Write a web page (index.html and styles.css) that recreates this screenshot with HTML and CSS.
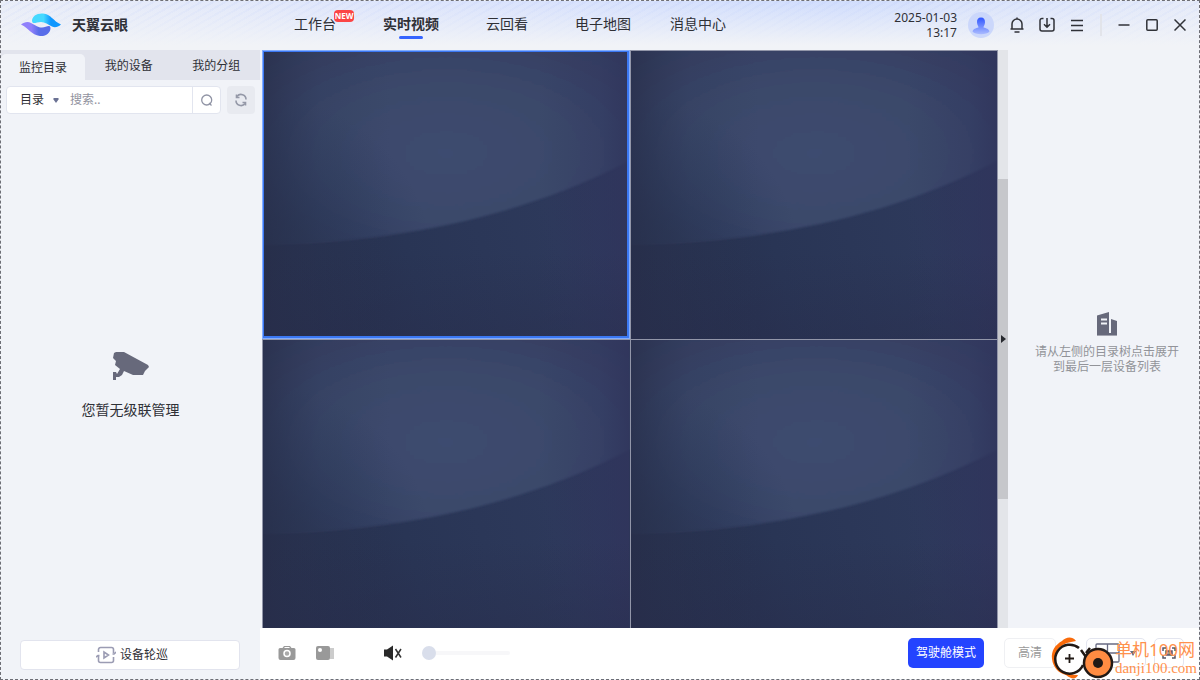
FILE: index.html
```html
<!DOCTYPE html>
<html lang="zh-CN">
<head>
<meta charset="utf-8">
<title>天翼云眼</title>
<link rel="stylesheet" href="styles.css">
</head>
<body>
<svg class="defs" aria-hidden="true">
  <defs>
    <radialGradient id="upper" cx="0.5" cy="0.55" r="0.68">
      <stop offset="0" stop-color="#3e4c6f"/>
      <stop offset="0.5" stop-color="#3b486b"/>
      <stop offset="1" stop-color="#353d60"/>
    </radialGradient>
    <linearGradient id="lower" x1="0" y1="0.8" x2="1" y2="0.6">
      <stop offset="0" stop-color="#252c48"/>
      <stop offset="0.4" stop-color="#293555"/>
      <stop offset="0.8" stop-color="#2d395b"/>
      <stop offset="1" stop-color="#2e365a"/>
    </linearGradient>
    <linearGradient id="sides" x1="0" y1="0" x2="1" y2="0">
      <stop offset="0" stop-color="#282f4b" stop-opacity="0.75"/>
      <stop offset="0.16" stop-color="#2c3755" stop-opacity="0.25"/>
      <stop offset="0.35" stop-color="#2c3957" stop-opacity="0"/>
      <stop offset="0.75" stop-color="#30365f" stop-opacity="0"/>
      <stop offset="0.92" stop-color="#30365f" stop-opacity="0.4"/>
      <stop offset="1" stop-color="#30355c" stop-opacity="0.85"/>
    </linearGradient>
    <linearGradient id="depth" x1="0" y1="0" x2="0" y2="1">
      <stop offset="0.7" stop-color="#282c4b" stop-opacity="0"/>
      <stop offset="1" stop-color="#282c4b" stop-opacity="0.4"/>
    </linearGradient>
    <radialGradient id="cornerFade" gradientUnits="userSpaceOnUse" cx="0" cy="215" r="170">
      <stop offset="0" stop-color="#283350"/>
      <stop offset="0.3" stop-color="#293553" stop-opacity="0.85"/>
      <stop offset="1" stop-color="#2b395e" stop-opacity="0"/>
    </radialGradient>
    <filter id="soften" x="-5%" y="-5%" width="110%" height="110%">
      <feGaussianBlur stdDeviation="1"/>
    </filter>
    <symbol id="tile" viewBox="0 0 366 288" preserveAspectRatio="none">
      <rect width="366" height="288" fill="url(#lower)"/>
      <path d="M-9 -9H375V106L366 110C250 170 120 193 -9 193Z" fill="url(#upper)" filter="url(#soften)"/>
      <path d="M-9 -9H375V106L366 110C250 170 120 193 -9 193Z" fill="url(#cornerFade)"/>
      <rect width="366" height="288" fill="url(#sides)"/>
      <rect width="366" height="288" fill="url(#depth)"/>
    </symbol>
    <linearGradient id="avatarFill" x1="0" y1="0" x2="0" y2="1">
      <stop offset="0" stop-color="#2f55ff"/>
      <stop offset="1" stop-color="#a9baff"/>
    </linearGradient>
    <linearGradient id="logoTop" x1="0" y1="0" x2="1" y2="0">
      <stop offset="0.4" stop-color="#45d9ff"/>
      <stop offset="0.65" stop-color="#0f97ff"/>
    </linearGradient>
    <linearGradient id="logoBottom" x1="0" y1="0" x2="1" y2="0">
      <stop offset="0.35" stop-color="#9080fb"/>
      <stop offset="0.6" stop-color="#586de9"/>
    </linearGradient>
  </defs>
</svg>

<div class="window">
  <header class="header">
    <div class="brand">
      <svg class="logo" viewBox="0 0 40 24" aria-hidden="true">
        <path d="M11 8C11 3 16 0 22 0.500C30 1 32 8 40 11.500C37 14 34 15 31 13.500C27 11.500 24 9 20 9C15 9 12 12 11 8Z" fill="url(#logoTop)"/>
        <path d="M29.500 15C29.500 20 25 23.500 19 23C10 22 8 15 0 11.500C3 9 7 8 10 10C15 12.500 17 14.500 21 14.500C25 14.500 29 11 29.500 15Z" fill="url(#logoBottom)"/>
      </svg>
      <h1 class="brand-name">天翼云眼</h1>
    </div>
    <nav class="nav">
      <a class="nav-item" href="#">工作台<span class="badge">NEW</span></a>
      <a class="nav-item nav-item-active" href="#">实时视频</a>
      <a class="nav-item" href="#">云回看</a>
      <a class="nav-item" href="#">电子地图</a>
      <a class="nav-item" href="#">消息中心</a>
    </nav>
    <div class="tools">
      <time class="clock">2025-01-03<br>13:17</time>
      <button class="icon-button avatar" aria-label="账号">
        <svg width="26" height="26" viewBox="0 0 26 26"><circle cx="13" cy="13" r="13" fill="#cbd7fb"/><path d="M13 5.500C16 5.500 17.200 7.500 17 10.500C16.800 13 15.500 14 15.500 15.500C18 16.200 21 17 21.500 19.500C19 23 7 23 4.500 19.500C5 17 8 16.200 10.500 15.500C10.500 14 9.200 13 9 10.500C8.800 7.500 10 5.500 13 5.500Z" fill="url(#avatarFill)"/></svg>
      </button>
      <button class="icon-button" aria-label="通知">
        <svg width="16" height="16" viewBox="0 0 16 16" class="line"><path d="M1.500 12H14.500M3 12V7A5 5 0 0 1 13 7V12M5.500 15H10.500M8 2V0.500"/></svg>
      </button>
      <button class="icon-button" aria-label="下载">
        <svg width="16" height="16" viewBox="0 0 16 16" class="line"><path d="M4.500 1.500H3A2 2 0 0 0 1 3.500V12A2 2 0 0 0 3 14H13A2 2 0 0 0 15 12V3.500A2 2 0 0 0 13 1.500H11.500M8 1V10M5 7.200L8 10.200L11 7.200"/></svg>
      </button>
      <button class="icon-button" aria-label="菜单">
        <svg width="16" height="16" viewBox="0 0 16 16" class="line"><path d="M2 3.500H14M2 8.500H14M2 13.500H14"/></svg>
      </button>
      <span class="divider"></span>
      <button class="icon-button win-button" aria-label="最小化">
        <svg width="12" height="12" viewBox="0 0 12 12" class="line"><path d="M0.500 6H11.500"/></svg>
      </button>
      <button class="icon-button win-button" aria-label="最大化">
        <svg width="12" height="12" viewBox="0 0 12 12" class="line"><rect x="0.800" y="0.800" width="10.400" height="10.400" rx="1"/></svg>
      </button>
      <button class="icon-button win-button" aria-label="关闭">
        <svg width="12" height="12" viewBox="0 0 12 12" class="line"><path d="M0.500 0.500L11.500 11.500M11.500 0.500L0.500 11.500"/></svg>
      </button>
    </div>
  </header>

  <div class="body">
    <aside class="sidebar">
      <div class="tabs" role="tablist">
        <button class="tab tab-active" role="tab" aria-selected="true">监控目录</button>
        <button class="tab" role="tab">我的设备</button>
        <button class="tab" role="tab">我的分组</button>
      </div>
      <div class="search-row">
        <form class="search">
          <select class="scope" aria-label="范围"><option>目录</option></select>
          <svg width="6" height="5" viewBox="0 0 6 5" aria-hidden="true"><path d="M0.500 0H5.500V1.500L3 5L0.500 1.500Z" fill="#6a7193"/></svg>
          <input class="query" type="text" placeholder="搜索.." aria-label="搜索">
          <button class="search-button" type="button" aria-label="搜索">
            <svg width="12" height="12" viewBox="0 0 12 12" fill="none" stroke="#9094a5" stroke-width="1.300"><circle cx="5.700" cy="6" r="5"/><path d="M8 9L10.500 11.500"/></svg>
          </button>
        </form>
        <button class="refresh" aria-label="刷新">
          <svg width="14" height="14" viewBox="0 0 14 14" fill="none" stroke="#9498a7" stroke-width="1.600"><path d="M3 3.500A5 5 0 0 1 12 6.500M11 10.500A5 5 0 0 1 2 7.500"/><path d="M5.500 4.500H2.500V1.500M8.500 9.500H11.500V12.500"/></svg>
        </button>
      </div>
      <div class="empty">
        <svg width="38" height="30" viewBox="0 0 38 30" aria-hidden="true"><path d="M2 2L4 1H12L36 14L37 16L33 20L31 24H21L12 20L10 24L7 26H4V29H1V21H4L5 23L8 18L3 14L4 10L1 7Z" fill="#67697b"/></svg>
        <p class="empty-text">您暂无级联管理</p>
      </div>
      <button class="patrol">
        <svg width="20" height="18" viewBox="0 0 20 18" fill="none" stroke="#9b9cb3" stroke-width="1.600" aria-hidden="true"><path d="M2.500 6V3.500A2 2 0 0 1 4.500 1.500H15.500A2 2 0 0 1 17.500 3.500V7M17.500 11V14.500A2 2 0 0 1 15.500 16.500H4.500A2 2 0 0 1 2.500 14.500V10"/><path d="M16.500 8H18L20 6M0 11L2 9.500H3.500M8 6V12L12.500 9Z"/></svg>
        设备轮巡
      </button>
    </aside>

    <main class="main">
      <div class="stage">
        <div class="grid">
          <div class="cell cell-active"><svg class="video"><use href="#tile"/></svg></div>
          <div class="cell"><svg class="video"><use href="#tile"/></svg></div>
          <div class="cell"><svg class="video"><use href="#tile"/></svg></div>
          <div class="cell"><svg class="video"><use href="#tile"/></svg></div>
        </div>
        <div class="splitter">
          <button class="handle" aria-label="收起">
            <svg width="5" height="8" viewBox="0 0 5 8"><path d="M0 0L5 4L0 8Z" fill="#26282e"/></svg>
          </button>
        </div>
        <section class="devices">
          <svg width="22" height="24" viewBox="0 0 22 24" aria-hidden="true"><path d="M1 3.500L13 0V21H15V7L21 9V23H1Z" fill="#67697b"/><path d="M5 7.500H11M5 11.500H11" stroke="#f1f3f8" stroke-width="2"/><path d="M1 23.500H21" stroke="#a3a4b0"/></svg>
          <p class="hint">请从左侧的目录树点击展开<br>到最后一层设备列表</p>
        </section>
      </div>

      <footer class="toolbar">
        <button class="icon-button" aria-label="截图">
          <svg width="18" height="16" viewBox="0 0 18 16"><path d="M2 3H4.500L6 1H12L13.500 3H16A1.500 1.500 0 0 1 17.500 4.500V13A2 2 0 0 1 15.500 15H2.500A2 2 0 0 1 0.500 13V4.500A1.500 1.500 0 0 1 2 3Z" fill="#999"/><circle cx="9" cy="8.500" r="3" fill="#aaa" stroke="#fff" stroke-width="1.500"/><path d="M6.500 2.500H11.500" stroke="#fff"/></svg>
        </button>
        <button class="icon-button record" aria-label="录像">
          <svg width="20" height="14" viewBox="0 0 20 14"><rect x="15" y="2" width="4" height="11" fill="#ccc"/><rect x="1" y="0" width="14" height="14" rx="2" fill="#999"/><circle cx="5" cy="4" r="2" fill="#fff"/></svg>
        </button>
        <button class="icon-button mute" aria-label="静音">
          <svg width="20" height="16" viewBox="0 0 20 16"><path d="M1 4.500H4L10 0.500V15.500L4 11.500H1Z" fill="#292929"/><path d="M12.500 4L18 12.500M18 4L12.500 12.500" stroke="#333" stroke-width="1.500"/></svg>
        </button>
        <input class="volume" type="range" min="0" max="100" value="0" aria-label="音量">
        <button class="cockpit">驾驶舱模式</button>
        <button class="ghost quality">高清</button>
        <button class="ghost layout" aria-label="布局">
          <svg width="42" height="20" viewBox="0 0 42 20"><g fill="none" stroke="#686b83" stroke-width="1.300"><rect x="1" y="1" width="23" height="18" rx="1"/><path d="M12.500 1V19M1 10H24"/></g><path d="M35 8H41L38 13Z" fill="#686b83"/></svg>
        </button>
        <button class="ghost full" aria-label="全屏">
          <svg width="14" height="12" viewBox="0 0 14 12" fill="none" stroke="#555868" stroke-width="1.500"><path d="M4 1H1V4M10 1H13V4M4 11H1V8M10 11H13V8"/><rect x="4" y="4" width="6" height="4" fill="#999"/></svg>
        </button>
      </footer>
    </main>
  </div>

  <div class="watermark">
    <svg width="64" height="44" viewBox="0 0 64 44" aria-hidden="true">
      <path d="M25 5C21 0 15 1 11 5C4 9 0 15 1 23C2 31 7 37 15 39C20 43 25 44 27 39C15 39 5 33 4 23C4 12 11 7 25 5Z" fill="#f96b0b"/>
      <circle cx="19" cy="23" r="14" fill="#fff" fill-opacity="0.9"/>
      <path d="M28 12A14.500 14.500 0 1 0 32 29" fill="none" stroke="#211915" stroke-width="2.500"/>
      <path d="M14 22.500H23M18.500 18V27" stroke="#211915" stroke-width="1.800"/>
      <path d="M30 14L35 21M35 17L39 12" stroke="#211915" stroke-width="2.500"/>
      <circle cx="47" cy="27" r="14" fill="#ff8c42" stroke="#211915" stroke-width="2.500"/>
      <circle cx="47" cy="27" r="5" fill="#211915"/>
    </svg>
    <div class="mark-text">
      <span class="mark-name">单机100网</span>
      <span class="mark-site">danji100.com</span>
    </div>
  </div>
</div>
</body>
</html>
```
FILE: styles.css
```css
* {
  box-sizing: border-box;
}

body {
  margin: 0;
  color: #2f3036;
  font: 12px/16px "Noto Sans", "Noto Sans CJK SC", sans-serif;
}

button,
input,
select {
  margin: 0;
  padding: 0;
  border: 0;
  color: inherit;
  background: none;
  font: inherit;
}

h1,
p {
  margin: 0;
}

svg {
  display: block;
  flex: none;
}

.defs {
  position: absolute;
  width: 0;
  height: 0;
}

.window {
  position: relative;
  display: flex;
  flex-direction: column;
  height: 100vh;
  border: 1px dashed #6d6e75;
  background: #f1f3f8;
}

/* Header */

.header {
  display: flex;
  align-items: center;
  height: 49px;
  flex: none;
  padding-bottom: 2px;
  background:
    linear-gradient(to bottom, transparent, #f1f3f7 90%),
    repeating-linear-gradient(150deg, transparent 0 4px, rgba(170, 190, 250, 0.12) 4px 6px),
    linear-gradient(to right, #e9edf8, #dce4fc 35%, #d0ddfd 70%, #e6ebf9);
}

.brand {
  display: flex;
  align-items: center;
  gap: 11px;
  width: 277px;
  padding-left: 20px;
}

.logo {
  width: 40px;
  height: 24px;
}

.brand-name {
  font-size: 14px;
  line-height: 20px;
}

.nav {
  display: flex;
  flex: 1;
  gap: 15px;
  padding-bottom: 2px;
}

.nav-item {
  position: relative;
  padding: 0 16px;
  color: inherit;
  font-size: 14px;
  line-height: 20px;
  text-decoration: none;
  white-space: nowrap;
}

.nav-item:last-child {
  padding-left: 8px;
}

.nav-item-active {
  font-weight: bold;
}

.nav-item-active::after {
  content: "";
  position: absolute;
  left: 50%;
  bottom: -5px;
  width: 24px;
  height: 3px;
  margin-left: -12px;
  border-radius: 2px;
  background: #3564ff;
}

.badge {
  position: absolute;
  top: -4px;
  left: 56px;
  width: 20px;
  border-radius: 4px;
  color: #fff;
  background: #fb4545;
  font: bold 8px/12px "Open Sans", sans-serif;
  text-align: center;
}

.tools {
  display: flex;
  align-items: center;
  padding-right: 13px;
}

.clock {
  font-size: 12px;
  line-height: 15px;
  text-align: right;
}

.icon-button {
  display: flex;
  margin-left: 14px;
}

.avatar {
  margin: 0 1px 0 11px;
}

.line {
  fill: none;
  stroke: #303238;
  stroke-width: 1.5;
}

.divider {
  width: 2px;
  height: 22px;
  margin-left: 15px;
  background: #e2e4ea;
}

.win-button {
  margin-left: 16px;
}

/* Sidebar */

.body {
  display: flex;
  flex: 1;
  min-height: 0;
}

.sidebar {
  display: flex;
  flex-direction: column;
  width: 259px;
  flex: none;
}

.tabs {
  display: grid;
  grid-template-columns: 84px 1fr 1fr;
  height: 30px;
  background: #e2e4ed;
}

.tab {
  padding-top: 2px;
  white-space: nowrap;
}

.tab-active {
  margin-top: 4px;
  border-radius: 5px 5px 0 0;
  background: #f1f3f8;
}

.search-row {
  display: flex;
  gap: 6px;
  padding: 6px 5px 0;
}

.search {
  display: flex;
  align-items: center;
  flex: 1;
  min-width: 0;
  height: 28px;
  border: 1px solid #e2e5ef;
  border-radius: 4px;
  background: #fff;
}

.scope {
  width: 46px;
  padding-left: 13px;
  appearance: none;
}

.query {
  flex: 1;
  min-width: 0;
  margin-left: 11px;
}

.query::placeholder {
  color: #9293a0;
}

.search-button {
  display: grid;
  place-items: center;
  width: 28px;
  height: 100%;
  border-left: 1px solid #e2e5ef;
}

.refresh {
  display: grid;
  place-items: center;
  width: 28px;
  border-radius: 4px;
  background: #e8eaf0;
}

.empty {
  display: flex;
  flex: 1;
  flex-direction: column;
  align-items: center;
  justify-content: center;
  gap: 19px;
  padding-top: 17px;
}

.empty-text {
  font-size: 14px;
  line-height: 20px;
}

.patrol {
  display: flex;
  align-items: center;
  justify-content: center;
  gap: 4px;
  height: 30px;
  margin: 0 20px 9px 19px;
  padding-left: 4px;
  border: 1px solid #e2e4ee;
  border-radius: 4px;
  background: #fff;
}

/* Video area */

.main {
  display: flex;
  flex: 1;
  flex-direction: column;
  min-width: 0;
}

.stage {
  display: flex;
  flex: 1;
  min-height: 0;
  padding-left: 2px;
}

.grid {
  display: grid;
  flex: 1;
  grid-template-columns: 1fr 1fr;
  grid-template-rows: 1fr 1fr;
  gap: 1px;
  padding: 1px 1px 0;
  background: #9296a9;
}

.cell {
  position: relative;
  display: grid;
  min-height: 0;
  background: #2c3657;
}

.video {
  width: 100%;
  height: 100%;
  min-height: 0;
}

.cell-active::after {
  content: "";
  position: absolute;
  inset: 0 1px 1px 0;
  border: 2px solid #3b78f3;
  border-width: 1px 2px 2px 1px;
  box-shadow: 0 0 0 1px #83adff;
}

.splitter {
  display: flex;
  flex-direction: column;
  justify-content: center;
  width: 10px;
  background: #e3e5e9;
}

.handle {
  display: flex;
  align-items: center;
  justify-content: center;
  height: 320px;
  background: #c6c7cb;
}

.devices {
  display: flex;
  flex-direction: column;
  align-items: center;
  justify-content: center;
  gap: 8px;
  width: 191px;
  padding: 8px 0 0 7px;
}

.hint {
  color: #929399;
  line-height: 15px;
  text-align: center;
}

/* Bottom toolbar */

.toolbar {
  display: flex;
  align-items: center;
  height: 51px;
  flex: none;
  padding: 0 15px 1px 4px;
  background: #fff;
}

.record {
  margin-left: 19px;
}

.mute {
  margin-left: 48px;
}

.volume {
  width: 88px;
  height: 14px;
  margin: 0 auto 0 19px;
  appearance: none;
}

.volume::-webkit-slider-runnable-track {
  height: 4px;
  border-radius: 2px;
  background: #f7f7f9;
}

.volume::-webkit-slider-thumb {
  width: 14px;
  height: 14px;
  margin-top: -5px;
  border-radius: 50%;
  background: #d9deeb;
  appearance: none;
}

.cockpit {
  width: 76px;
  height: 30px;
  border-radius: 5px;
  color: #fff;
  background: #2444ff;
}

.ghost {
  display: grid;
  place-items: center;
  height: 30px;
  border: 1px solid #e3e5ef;
  border-radius: 5px;
}

.quality {
  width: 52px;
  margin-left: 20px;
  border-color: #eff0f3;
  color: #999;
}

.layout {
  width: 60px;
  margin: 0 8px 0 30px;
}

.full {
  width: 30px;
}

/* Site mark laid over the toolbar */

.watermark {
  position: absolute;
  right: 2px;
  bottom: -1px;
  display: flex;
  align-items: center;
  pointer-events: none;
}

.mark-text {
  display: flex;
  flex-direction: column;
  color: #ff914d;
}

.mark-name {
  font-size: 17px;
  line-height: 20px;
}

.mark-site {
  font: 15px/16px "Liberation Serif", serif;
}
```
